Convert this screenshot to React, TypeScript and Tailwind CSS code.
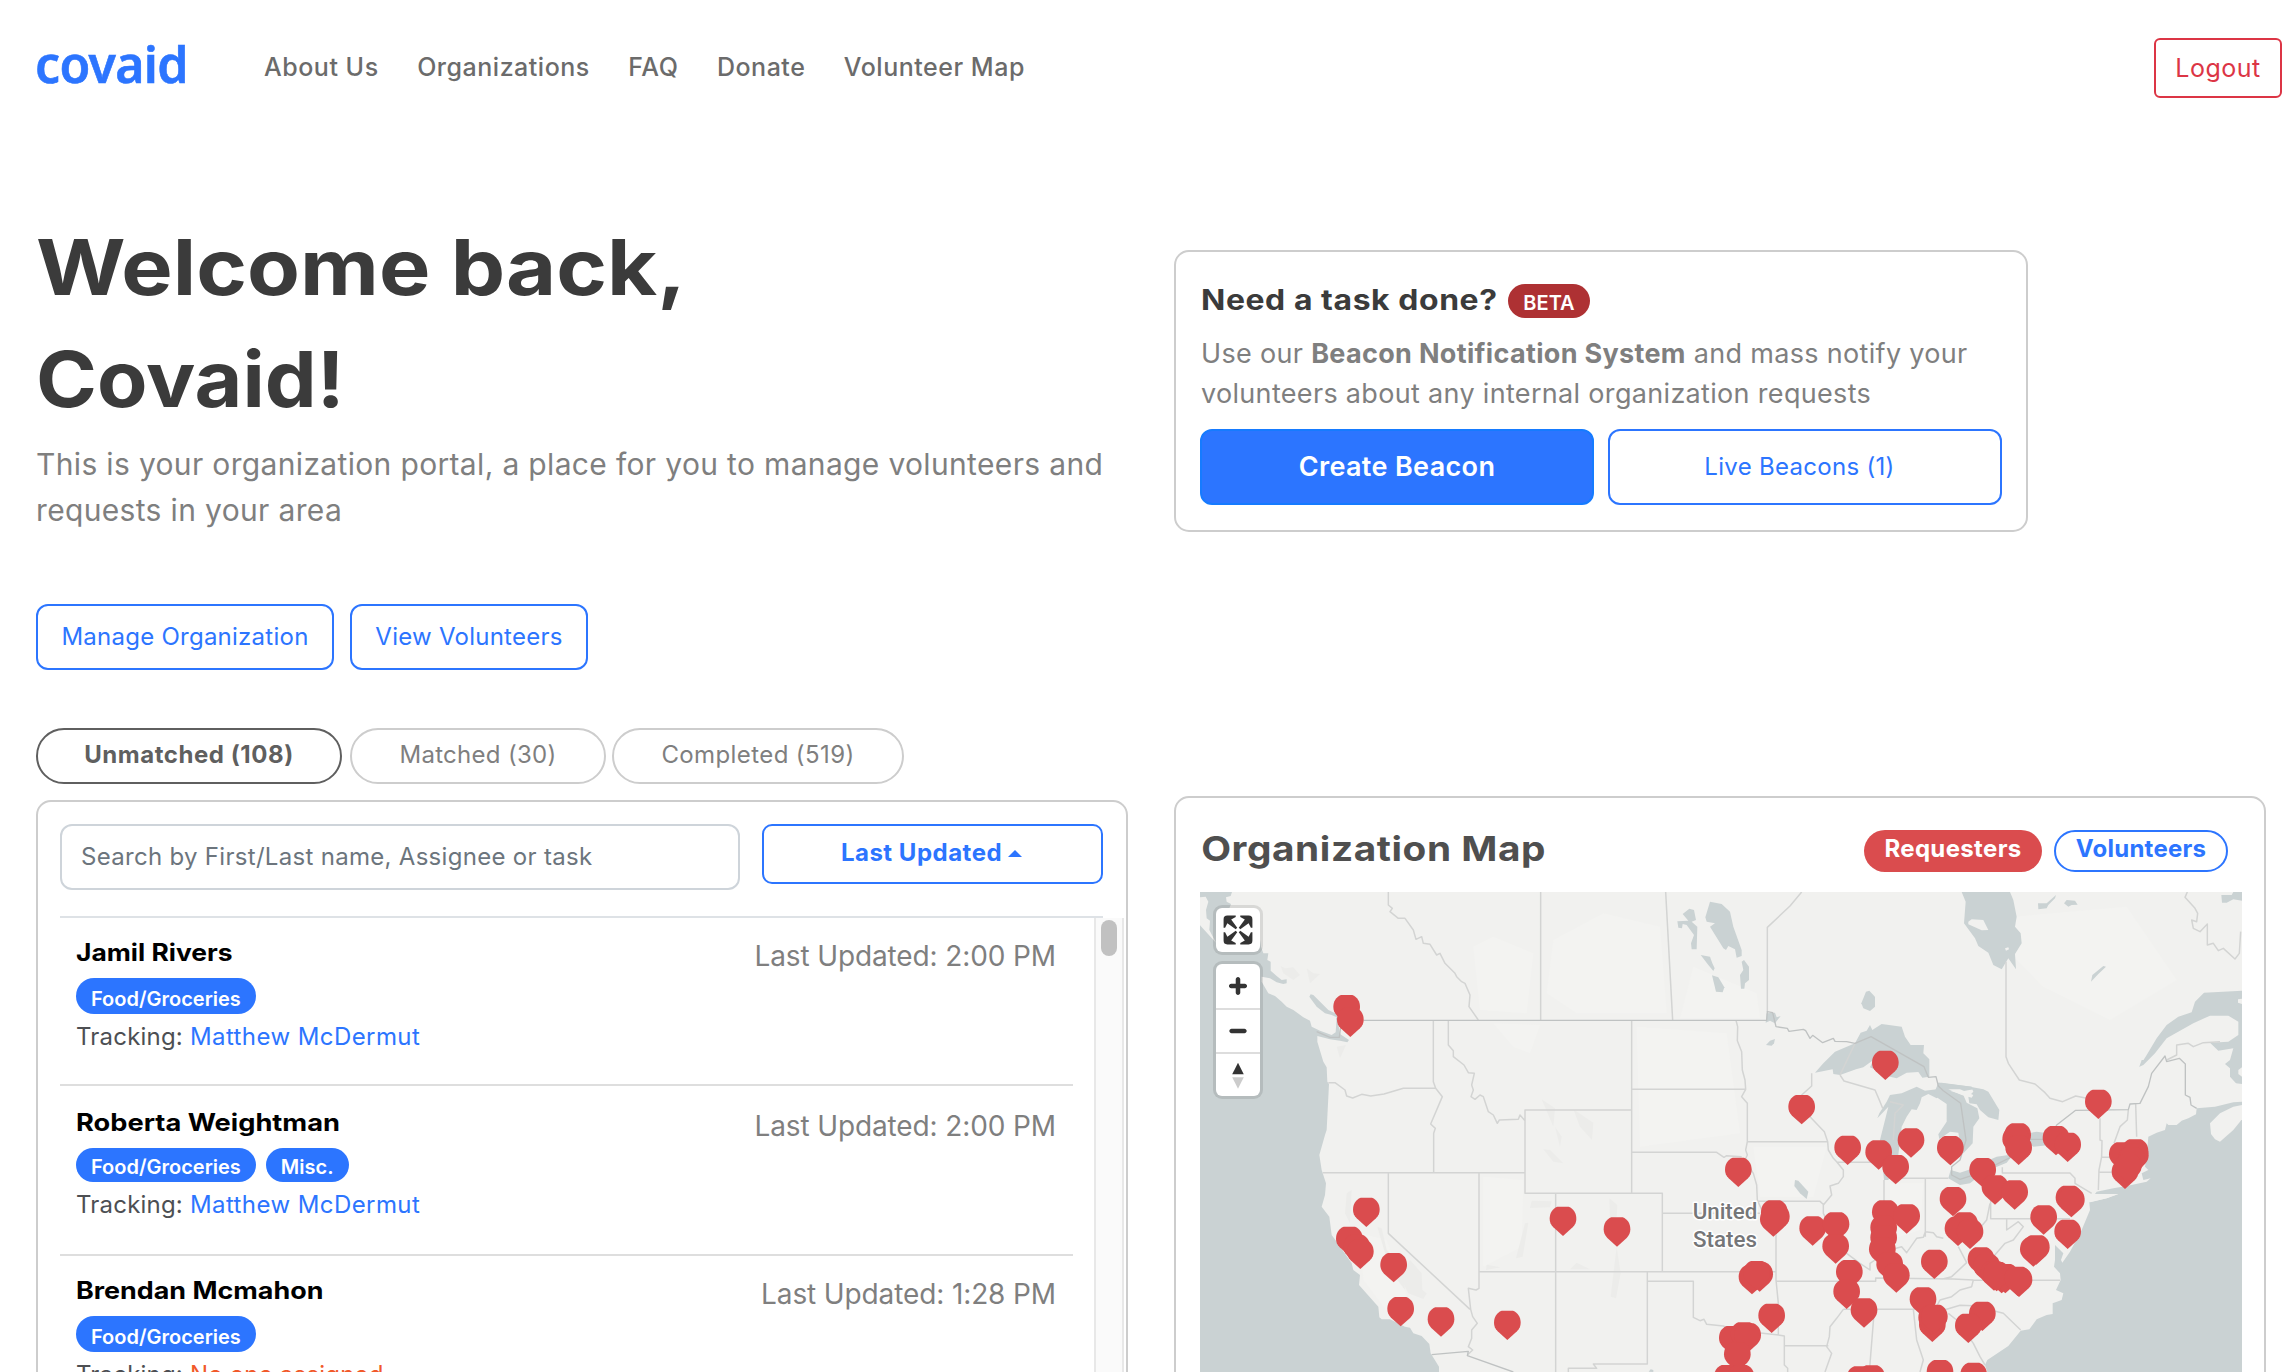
const NAV = ['About Us', 'Organizations', 'FAQ', 'Donate', 'Volunteer Map'];

type Request = {
  name: string;
  tags: string[];
  tracking: string;
  assigned: boolean;
  time: string;
  tall: boolean;
};

const REQUESTS: Request[] = [
  { name: 'Jamil Rivers', tags: ['Food/Groceries'], tracking: 'Matthew McDermut', assigned: true, time: '2:00 PM', tall: false },
  { name: 'Roberta Weightman', tags: ['Food/Groceries', 'Misc.'], tracking: 'Matthew McDermut', assigned: true, time: '2:00 PM', tall: true },
  { name: 'Brendan Mcmahon', tags: ['Food/Groceries'], tracking: 'No one assigned', assigned: false, time: '1:28 PM', tall: false },
];

// Map geometry, in thirds of a pixel.
const OCEAN = [
  'M120 336H216L212 348 198 352 200 365 213 372 208 385 300 480 303 500 310 520 325 520 322 540 332 545 332 572 350 588 365 600 380 598 380 610 370 612 350 607 330 595 305 590 305 605 325 640 345 648 365 665 380 680 400 690 430 712 450 722 455 740 480 752 515 765 527 757 530 712 515 705 495 700 470 680 448 650 452 643 460 645 490 675 505 690 530 702 540 762 567 780 562 787 540 782 510 778 472 768 472 785 490 845 500 862 502 905 507 912 500 1050 495 1065 478 1125 485 1170 498 1210 495 1245 485 1280 508 1310 515 1365 530 1385 575 1450 580 1470 600 1485 597 1515 655 1580 658 1612 665 1618 690 1618 735 1640 750 1643 760 1660 785 1668 808 1692 812 1720 837 1760V1776H120V436Z',
  'M3246 965L3220 967 3165 980 3110 985 3108 1003 3085 1015 3065 1022 3050 1035 3025 1035 3020 1030 3015 1050 2990 1058 2965 1070 2960 1130 2955 1160 2965 1170 2945 1180 2950 1200 2972 1195 2960 1205 2900 1218 2860 1225 2810 1235 2805 1242 2875 1242 2840 1255 2788 1267 2790 1290 2765 1350 2730 1415 2707 1448 2703 1440 2710 1420 2685 1395 2685 1440 2682 1460 2700 1480 2702 1500 2688 1530 2710 1540 2705 1560 2678 1570 2678 1602 2660 1605 2630 1618 2608 1648 2582 1652 2545 1698 2482 1740 2475 1755 2482 1776H3246Z',
];

const LAND = [
  'M120 352L137 350 145 365 138 390 140 415 150 422 148 450 168 488 120 436Z',
  'M3150 1030L3180 1000 3220 980 3246 975V1018L3220 1050 3180 1085 3165 1078 3153 1062Z',
  'M2425 425L2435 418 2470 420 2485 450 2465 451 2425 433Z',
  'M2535 505L2545 502 2547 508 2538 512Z',
  'M2365 928L2400 928 2440 945 2435 953 2405 945Z',
  'M3234 658L3246 656V672L3234 668Z',
  'M3235 870L3246 862V890L3235 882Z',
];

const LAKES = [
  'M1965 878L1990 850 2025 815 2085 790 2102 758 2120 752 2130 735 2137 750 2165 732 2225 740 2235 770 2252 795 2292 795 2290 820 2308 838 2308 890 2287 893 2275 876 2240 878 2210 895 2190 890 2130 862 2140 840 2110 862 2088 868 2040 885 2020 882 2018 868Z',
  'M2152 1015L2158 1000 2180 965 2190 945 2225 940 2270 920 2295 932 2330 928 2335 908 2435 920 2440 928 2400 935 2375 930 2345 940 2330 955 2305 942 2285 952 2280 970 2270 990 2255 988 2240 1010 2225 1040 2215 1125 2200 1165 2185 1200 2172 1200 2168 1160 2160 1080 2185 980Z',
  'M2335 908L2345 908 2435 920 2437 928 2400 928 2370 932 2410 945 2420 968 2452 985 2458 1015 2440 1040 2438 1090 2410 1120 2400 1090 2395 1058 2370 1055 2338 1077 2335 1063 2360 1025V972L2320 945Z',
  'M2434 921L2470 928 2485 935 2518 990 2515 1020 2485 1012 2460 990 2450 973 2428 970 2425 950 2440 935Z',
  'M2372 1170L2400 1178 2440 1165 2465 1150 2510 1130 2560 1123 2540 1148 2500 1165 2455 1190 2430 1210 2400 1215 2365 1195Z',
  'M2605 1060L2630 1055 2680 1062 2670 1095 2620 1100 2600 1085Z',
  'M2405 336L2417 365 2412 430 2445 475 2455 498 2485 518 2500 555 2525 568 2545 535 2568 568 2565 522 2585 490 2582 460 2565 440 2570 410 2560 360 2550 336Z',
  'M2938 860L2960 825 2990 775 3020 735 3055 710 3095 697 3105 665 3132 638 3246 632V912L3228 910 3210 890 3210 865 3195 852 3210 840 3220 805 3175 812 3150 788 3205 785 3235 765V725L3205 707H3150L3100 730 3020 775 2985 820 2950 855Z',
  'M2938 860L2963 840H2945Z',
  'M1650 365L1685 372 1710 395 1720 440 1745 510 1745 528 1730 533 1725 508 1705 498 1698 510 1690 505 1650 440 1665 430 1640 425 1636 412Z',
  'M1568 402L1588 386 1602 390 1608 420 1595 425 1612 440 1610 508H1595L1593 490 1602 465 1580 435 1568 432 1566 445 1555 443 1552 424 1585 422Z',
  'M1622 525L1650 530 1657 550 1664 565 1660 573 1645 555Z',
  'M1656 586L1675 592 1693 622 1688 637 1668 635Z',
  'M1745 545L1752 540 1767 560 1767 600 1755 610 1753 626H1743L1740 585 1750 570Z',
  'M1820 700L1845 698 1850 712 1862 708 1845 730 1830 722 1817 728Z',
  'M1818 795L1830 782 1845 777 1842 790 1835 797Z',
  'M2104 670L2118 635 2128 632 2145 650V680L2130 693 2110 685Z',
  'M1905 1200L1915 1202 1945 1235 1940 1257 1920 1240 1903 1218Z',
  'M2634 370L2660 370 2688 345 2685 355 2665 375 2660 385 2635 388Z',
  'M2712 370L2720 360 2745 362 2753 374 2735 375 2725 380Z',
  'M2793 605L2797 585 2830 558 2838 560 2815 582Z',
  'M3184 345L3215 345 3220 336H3246V362L3220 358 3200 368H3186Z',
  'M1466 1775L1472 1768 1480 1770V1776Z',
];

const TERRAIN = [
  'M1180 480L1330 400 1500 440 1520 700 1250 700 1160 640Z',
  'M1000 730L1140 735 1110 820 1060 800Z',
  'M940 500L1000 470 1120 520 1100 700 960 690Z',
  'M1600 560L1790 640 1800 715 1560 715Z',
  'M1430 740L1700 760 1740 1060 1440 1100Z',
  'M1780 1100L2000 1100 1960 1250 1800 1250Z',
  'M2190 1210L2290 1210 2280 1350 2190 1380Z',
  'M600 1360L680 1380 760 1600 700 1620 610 1500Z',
  'M970 1190L1090 1200 1085 1400 970 1460Z',
  'M2450 420L2900 380 3050 600 2850 720 2650 620Z',
];
const RIDGES = [
  'M560 1240L575 1230 570 1330 555 1300Z',
  'M652 1340L665 1345 680 1410 725 1450 735 1530 690 1470Z',
  'M750 1440L785 1480 787 1530 800 1540 790 1557 745 1540 720 1490Z',
  'M362 558L375 565 400 562 420 585 400 600 370 580Z',
  'M440 565L460 580 480 582 450 610Z',
  'M530 800L558 795 540 835Z',
  'M1115 1262L1175 1264 1170 1282 1110 1284Z',
  'M1095 1330L1105 1328 1088 1430 1068 1435Z',
  'M980 1454L1022 1462 978 1470Z',
  'M1145 958L1185 985 1180 1040Z',
  'M1185 1040L1205 1070 1200 1100Z',
  'M1150 1108L1170 1110 1210 1150 1180 1145Z',
  'M1240 988L1300 1028 1296 1080 1260 1040Z',
  'M1348 1255L1372 1275 1370 1310 1350 1320Z',
  'M1370 1400L1382 1480 1368 1555 1352 1550Z',
  'M1250 1448L1290 1468H1230Z',
];

const STATES =
  'M685 336V375L697 385 690 395 715 415 735 415 760 450 768 478 785 470 790 490 810 493 830 525 840 520 855 550 885 580 890 590 905 605 915 610 930 645 927 680 955 720' +
  'M1142 336V721M1517 336L1538 721M1925 336L1890 378 1822 442V695M2538 545V830L2545 850 2578 900 2625 912 2655 938 2670 955 2708 965 2747 948 2780 955' +
  'M3020 840L3050 825V795L3085 790 3100 800 3130 788 3180 785' +
  'M3082 336L3075 352 3105 385 3113 400 3110 425 3095 420 3100 445 3120 455 3142 432V495L3160 490 3175 512 3190 505 3225 537 3238 520 3242 455' +
  'M820 721V905L827 925 847 950 812 1032 826 1045 821 1060V1178M505 908H525L555 930 560 948 578 954 605 943 632 948 672 942 730 925H827' +
  'M865 721V795L880 812V830L912 855 925 878 943 880 935 915 940 930 933 950 945 958 960 945 970 950 985 995 1000 1005 1012 1030 1018 1020 1075 1018 1080 1005 1095 1022' +
  'M1095 990H1415V1240H1095ZM488 1178H1095M685 1178V1360L930 1588M957 1178V1525L948 1530 925 1525 932 1588 938 1610 952 1630 935 1650V1675L925 1700 938 1710 922 1725' +
  'M1187 1240V1776M957 1475H1848M1415 1240H1507V1475M1507 1300H1800M1848 1340V1475M1415 721V990M1415 928H1757' +
  'M1728 721L1733 740 1732 782 1745 815 1747 870 1755 900 1757 928 1745 950 1762 970V1085L1757 1110 1762 1125 1755 1140 1780 1180 1790 1215 1792 1260 1810 1300 1848 1340' +
  'M1415 1117H1670L1692 1132 1700 1127 1745 1130M1762 1085H2002M1795 1264H1980L1992 1275' +
  'M1955 880V918L1925 945 1940 1000 1993 1055 2003 1085 2005 1110 2020 1135 2030 1145 2050 1170V1190L2035 1210 2010 1218 2015 1245 1990 1275 1990 1300 2010 1340 2060 1420 2100 1450 2130 1470V1450L2145 1440 2150 1420 2190 1410 2225 1400 2240 1418 2270 1375 2290 1372 2296 1355 2320 1358 2330 1370 2350 1375' +
  'M2030 1147H2168M2040 885L2052 903 2145 930 2160 965 2168 985M2172 1200V1400M2185 1195H2365M2296 1195V1370' +
  'M1848 1504H2147V1494L2380 1497 2440 1500 2700 1501M2050 1588H2360L2400 1576 2440 1577 2530 1600 2582 1650' +
  'M1848 1475V1500L1855 1570V1665L1873 1668V1755L1883 1765V1776M1462 1475V1503M1462 1504H1600V1612L1620 1622 1632 1618 1640 1633 1690 1638 1720 1650 1856 1665M1462 1503V1752H1300L1310 1765 1225 1765V1776M1873 1697H2005' +
  'M2050 1588L2030 1615 2010 1640 2008 1670 2000 1700 2015 1720 1995 1776M2143 1588L2128 1776M2260 1588L2270 1680 2290 1740 2280 1776' +
  'M2527 1162V1179H2730L2745 1195V1210L2795 1240M2492 1260V1316H2730M2820 1015V1080L2826 1082 2825 1130 2817 1170 2815 1230M2905 990L2902 1020 2880 1040 2862 1090M2927 972L2930 1070M2826 1132H2850M2817 1177H2855' +
  'M2540 1316V1350L2575 1325 2590 1340 2560 1380 2535 1390 2500 1430M2490 1270L2480 1320 2455 1350M2395 1400L2420 1448 2375 1490 2345 1498M2440 1500L2435 1520 2400 1530 2375 1550 2340 1560 2325 1588M2365 1600L2390 1620 2440 1690 2460 1730 2475 1755' +
  'M2040 885L2085 790M2200 1080L2205 1000 2230 975 2190 965';

const NATION =
  'M610 721H1820L1822 695 1838 698 1848 740 1882 745 1887 754 1930 748 1937 752 1950 775 1958 766 1988 788 2020 775 2025 784 2060 785 2085 790 2133 770 2292 860 2305 892 2328 890 2335 918 2350 932 2402 970 2418 1080 2400 1140 2375 1160V1185L2400 1198 2455 1180 2560 1128' +
  'M2600 1078H2670L2690 1035 2747 991 2905 989 2910 972 2940 970 2965 920 2975 880 3015 828 3020 845 3058 835 3076 852V945L3090 952 3093 975 3110 985' +
  'M470 755L510 772 538 772 542 740 530 715M815 1724L925 1714 922 1727 1060 1776';

const PINS: [number, number][] = [
  [560, 733], [571, 771], [619, 1341], [568, 1428], [590, 1452], [601, 1467], [701, 1507], [722, 1639], [843, 1670], [1042, 1680],
  [1209, 1368], [1371, 1400], [1735, 1221], [1925, 1033], [2176, 900], [2063, 1155], [2156, 1169], [2207, 1213], [2253, 1133],
  [1843, 1349], [1849, 1362], [1840, 1370], [1958, 1397], [2028, 1385], [2027, 1451], [2176, 1349], [2171, 1395], [2171, 1425],
  [2167, 1460], [2189, 1505], [2240, 1361], [2209, 1538], [2068, 1528], [2060, 1587], [2112, 1643], [2323, 1497], [1776, 1543],
  [1799, 1535], [1790, 1531], [1835, 1659], [1717, 1726], [1752, 1715], [1763, 1718], [1732, 1775], [1702, 1843], [1743, 1843],
  [2289, 1610], [2317, 1686], [2315, 1665], [2323, 1662], [2100, 1847], [2135, 1844], [2815, 1017], [2371, 1156], [2573, 1118],
  [2567, 1130], [2576, 1155], [2688, 1126], [2723, 1146], [2887, 1175], [2925, 1166], [2895, 1227], [2926, 1178], [2915, 1190],
  [2905, 1210], [2468, 1222], [2505, 1274], [2564, 1289], [2379, 1309], [2727, 1305], [2734, 1312], [2651, 1364], [2723, 1407],
  [2620, 1460], [2629, 1454], [2414, 1385], [2394, 1398], [2430, 1407], [2463, 1490], [2480, 1510], [2502, 1532], [2525, 1540],
  [2536, 1540], [2510, 1534], [2577, 1551], [2573, 1548], [2467, 1653], [2425, 1689], [2340, 1828], [2441, 1836],
];

function OrganizationMap() {
  return (
    <div className="relative h-[480px] w-[1042px]">
      <svg width="1042" height="480" viewBox="120 336 3126 1440" className="block">
        <rect x="120" y="336" width="3126" height="1440" fill="#f1f1ef" />
        <g fill="#f3f3f1">{TERRAIN.map((d) => <path key={d} d={d} />)}</g>
        <g fill="#ececea">{RIDGES.map((d) => <path key={d} d={d} />)}</g>
        <g fill="#cad2d3">{OCEAN.map((d) => <path key={d} d={d} />)}</g>
        <g fill="#cad2d3">{LAKES.map((d) => <path key={d} d={d} />)}</g>
        <g fill="#f1f1ef">{LAND.map((d) => <path key={d} d={d} />)}</g>
        <path d="M2800 1247L2875 1242 2840 1255 2790 1267 2786 1262Z" fill="#f1f1ef" />
        <path d={STATES} fill="none" stroke="#d3d4d3" strokeWidth="4.5" strokeLinejoin="round" />
        <path d={NATION} fill="none" stroke="#bfc2c2" strokeWidth="4" strokeLinejoin="round" />
        <g
          fill="#757678"
          stroke="#fff"
          strokeWidth="9"
          strokeLinejoin="round"
          paintOrder="stroke"
          textAnchor="middle"
          fontSize="67"
          className="font-[Roboto] font-medium"
        >
          <text x="1695" y="1318">United</text>
          <text x="1695" y="1401">States</text>
        </g>
        <g fill="#da4c4e">
          {PINS.map(([x, y]) => (
            <path
              key={`${x}-${y}`}
              transform={`translate(${x} ${y})`}
              d="M0 0L-29 -26C-37 -34 -40 -43 -40 -52C-40 -69 -32 -82 -17 -88H17C32 -82 40 -69 40 -52C40 -43 37 -34 29 -26Z"
            />
          ))}
        </g>
      </svg>
      <div className="absolute left-[13px] top-[13px] flex flex-col gap-[6px]">
        <div className="rounded-[9px] bg-black/10 p-[3px]">
          <div className="h-[44px] w-[44px] rounded-[6px] bg-white">
            <svg viewBox="0 0 29 29" className="h-[44px] w-[44px]" fill="#333">
              <path d="M24 16v5.5c0 1.75-.75 2.5-2.5 2.5H16v-1l3-1.5-4-5.5 1-1 5.5 4 1.5-3h1zM6 16l1.5 3 5.5-4 1 1-4 5.5 3 1.5v1H7.5C5.75 24 5 23.25 5 21.5V16h1zm7-11v1l-3 1.5 4 5.5-1 1-5.5-4L6 13H5V7.5C5 5.75 5.75 5 7.5 5H13zm11 2.5c0-1.75-.75-2.5-2.5-2.5H16v1l3 1.5-4 5.5 1 1 5.5-4 1.5 3h1V7.5z" />
            </svg>
          </div>
        </div>
        <div className="rounded-[9px] bg-black/10 p-[3px]">
          <div className="flex h-[132px] w-[44px] flex-col overflow-hidden rounded-[6px] bg-white">
            <svg viewBox="0 0 29 29" className="h-[44px] w-[44px]" fill="#333">
              <path d="M14.5 8.5c-.75 0-1.5.75-1.5 1.5v3h-3c-.75 0-1.5.75-1.5 1.5S9.25 16 10 16h3v3c0 .75.75 1.5 1.5 1.5S16 19.75 16 19v-3h3c.75 0 1.5-.75 1.5-1.5S19.75 13 19 13h-3v-3c0-.75-.75-1.5-1.5-1.5z" />
            </svg>
            <div className="border-t-2 border-[#ddd]">
              <svg viewBox="0 0 29 29" className="h-[42px] w-[44px]" fill="#333">
                <path d="M10 13c-.75 0-1.5.75-1.5 1.5S9.25 16 10 16h9c.75 0 1.5-.75 1.5-1.5S19.75 13 19 13h-9z" />
              </svg>
            </div>
            <div className="border-t-2 border-[#ddd]">
              <svg viewBox="0 0 29 29" className="h-[42px] w-[44px]">
                <path d="M10.5 14l4-8 4 8h-8z" fill="#333" />
                <path d="M10.5 16l4 8 4-8h-8z" fill="#ccc" />
              </svg>
            </div>
          </div>
        </div>
      </div>
    </div>
  );
}

function RequestRow({ name, tags, tracking, assigned, time, tall }: Request) {
  return (
    <div
      className={
        'flex w-[1013px] justify-between border-b-2 border-[#dedede] pl-4 pr-[17px] ' +
        (tall ? 'h-[170px] pt-[19px]' : 'h-[168px] pt-[17px]')
      }
    >
      <div>
        <div
          className={
            'h-9 origin-left whitespace-nowrap text-[24px] font-bold leading-9 text-black ' +
            (tall ? 'scale-x-[1.135]' : assigned ? 'scale-x-[1.1]' : 'scale-x-[1.12]')
          }
        >
          {name}
        </div>
        <div className="mt-[7px] flex gap-[10px]">
          {tags.map((tag) => (
            <span
              key={tag}
              className={
                'flex items-center rounded-full bg-[#2c75ff] px-[15px] text-[20px] font-semibold leading-none text-white ' +
                (tall ? 'h-[34px] pt-1' : 'h-9 pt-[5px]')
              }
            >
              {tag}
            </span>
          ))}
        </div>
        <div className="mt-[5px] whitespace-nowrap text-[24px] leading-9 tracking-[0.2px] text-[#4d4f53]">
          Tracking:{' '}
          <span className={assigned ? 'tracking-[0.42px] text-[#2c75ff]' : 'tracking-[0.2px] text-[#f1592a]'}>{tracking}</span>
        </div>
      </div>
      <div className="mt-[3px] h-9 text-[28px] leading-9 tracking-[-0.12px] text-[#7f7f7f]">Last Updated: {time}</div>
    </div>
  );
}

export default function App() {
  return (
    <div className="h-[1372px] w-[2295px] overflow-hidden bg-white font-[Inter,sans-serif]">
      <header className="flex h-[134px] items-center pl-[35px] pr-[13px]">
        <div className="w-[229px] pb-[7px] font-['Noto_Sans',sans-serif] text-[50px] font-semibold leading-none tracking-[-0.7px] text-[#2c75ff] [-webkit-text-stroke:0.6px_#2c75ff]">
          covaid
        </div>
        <nav className="flex gap-[38.5px] pt-0.5 text-[25px] font-medium tracking-[0.52px] text-[#6b6b6b]">
          {NAV.map((item) => (
            <a key={item}>{item}</a>
          ))}
        </nav>
        <button className="ml-auto mt-0.5 h-[60px] w-[128px] rounded-[6px] border-2 border-[#dc3545] pt-0.5 text-[25px] tracking-[0.5px] text-[#dc3545]">
          Logout
        </button>
      </header>

      <main className="flex gap-[46px] pl-9">
        <section className="w-[1092px]">
          <h1 className="mt-[77px] text-[77px] font-bold leading-[112px] text-[#3b3b3b]">
            <span className="block origin-left scale-x-[1.122] whitespace-nowrap">Welcome back,</span>
            <span className="block origin-left scale-x-[1.07]">Covaid!</span>
          </h1>
          <p className="mt-[6px] text-[30px] leading-[46px] tracking-[0.34px] text-[#7f7f7f]">
            This is your organization portal, a place for you to manage volunteers and
            <br />
            requests in your area
          </p>
          <div className="mt-[71px] flex gap-4 text-[24px] tracking-[0.25px] text-[#2c75ff]">
            <button className="h-[66px] w-[298px] rounded-[12px] border-2 border-[#2c75ff]">Manage Organization</button>
            <button className="h-[66px] w-[238px] rounded-[12px] border-2 border-[#2c75ff]">View Volunteers</button>
          </div>
          <div className="mt-[58px] flex text-[24px] text-[#7f7f7f]">
            <button className="mr-2 h-14 w-[306px] rounded-full border-2 border-[#5f5f5f] pb-0.5 font-bold tracking-[0.55px] text-[#5f5f5f]">
              Unmatched (108)
            </button>
            <button className="mr-[6px] h-14 w-[256px] rounded-full border-2 border-[#cdcdcd] pb-0.5 tracking-[0.3px]">Matched (30)</button>
            <button className="h-14 w-[292px] rounded-full border-2 border-[#cdcdcd] pb-0.5 tracking-[0.4px]">Completed (519)</button>
          </div>
          <div className="mt-4 h-[640px] rounded-[15px] border-2 border-[#cdcdcd] pl-[22px] pt-[22px]">
            <div className="flex items-start gap-[22px]">
              <div className="flex h-[66px] w-[680px] items-center rounded-[12px] border-2 border-[#ced4da] pl-[19px] text-[24px] tracking-[0.3px] text-[#6c757d]">
                Search by First/Last name, Assignee or task
              </div>
              <button className="flex h-[60px] w-[341px] items-center justify-center gap-[6px] rounded-[10px] border-2 border-[#2c75ff] pb-0.5 pr-0.5 text-[24px] font-bold tracking-[0.5px] text-[#2c75ff]">
                Last Updated
                <span className="h-0 w-0 border-x-[7px] border-b-[7px] border-x-transparent border-b-[#2c75ff]" />
              </button>
            </div>
            <div className="mt-[26px] h-0.5 w-[1043px] bg-[#dee2e6]" />
            <div className="flex justify-between pr-0.5">
              <div>
                {REQUESTS.map((request) => (
                  <RequestRow key={request.name} {...request} />
                ))}
              </div>
              <div className="h-[500px] w-[30px] border-x-2 border-[#e8e8e8] bg-[#fafafa] pl-[5px] pt-0.5">
                <div className="h-9 w-4 rounded-full bg-[#c1c1c1]" />
              </div>
            </div>
          </div>
        </section>

        <section className="w-[1092px]">
          <div className="mt-[116px] h-[282px] w-[854px] rounded-[15px] border-2 border-[#cdcdcd] px-6 pt-7">
            <div className="flex h-10 items-center pl-px">
              <h2 className="w-[307px] whitespace-nowrap text-[28px] font-bold text-[#3b3b3b]">
                <span className="inline-block origin-left scale-x-[1.14] tracking-[0.5px]">Need a task done?</span>
              </h2>
              <span className="mt-[2px] flex h-[34px] w-[82px] items-center justify-center rounded-full bg-[#ae3133] pt-[3px] text-[20px] font-semibold text-white">
                BETA
              </span>
            </div>
            <p className="mt-[14px] whitespace-nowrap pl-px text-[27px] leading-10 tracking-[0.32px] text-[#7f7f7f]">
              Use our <b>Beacon Notification System</b> and mass notify your
              <br />
              volunteers about any internal organization requests
            </p>
            <div className="mt-[15px] flex gap-[14px]">
              <button className="h-[76px] w-[394px] rounded-[12px] border-2 border-[#167bff] bg-[#2c75ff] text-[27px] font-semibold tracking-[0.35px] text-white">
                Create Beacon
              </button>
              <button className="h-[76px] w-[394px] rounded-[12px] border-2 border-[#2c75ff] pr-[11px] text-[24px] tracking-[0.3px] text-[#2c75ff]">
                Live Beacons (1)
              </button>
            </div>
          </div>

          <div className="mt-[264px] h-[640px] rounded-[15px] border-2 border-[#cdcdcd] pl-6">
            <div className="flex h-[94px] items-start pr-9 pt-[30px]">
              <h2 className="origin-left scale-x-[1.14] whitespace-nowrap pl-px text-[34px] font-bold leading-[42px] tracking-[0.5px] text-[#4f4f4f]">
                Organization Map
              </h2>
              <span className="ml-auto mt-0.5 flex h-[42px] w-[178px] items-center justify-center rounded-full bg-[#da4c4e] pb-[4px] text-[24px] font-bold tracking-[0.35px] text-white">
                Requesters
              </span>
              <span className="ml-3 mt-0.5 flex h-[42px] w-[174px] items-center justify-center rounded-full border-2 border-[#2c75ff] pb-[4px] text-[24px] font-bold tracking-[0.25px] text-[#2c75ff]">
                Volunteers
              </span>
            </div>
            <OrganizationMap />
          </div>
        </section>
      </main>
    </div>
  );
}
